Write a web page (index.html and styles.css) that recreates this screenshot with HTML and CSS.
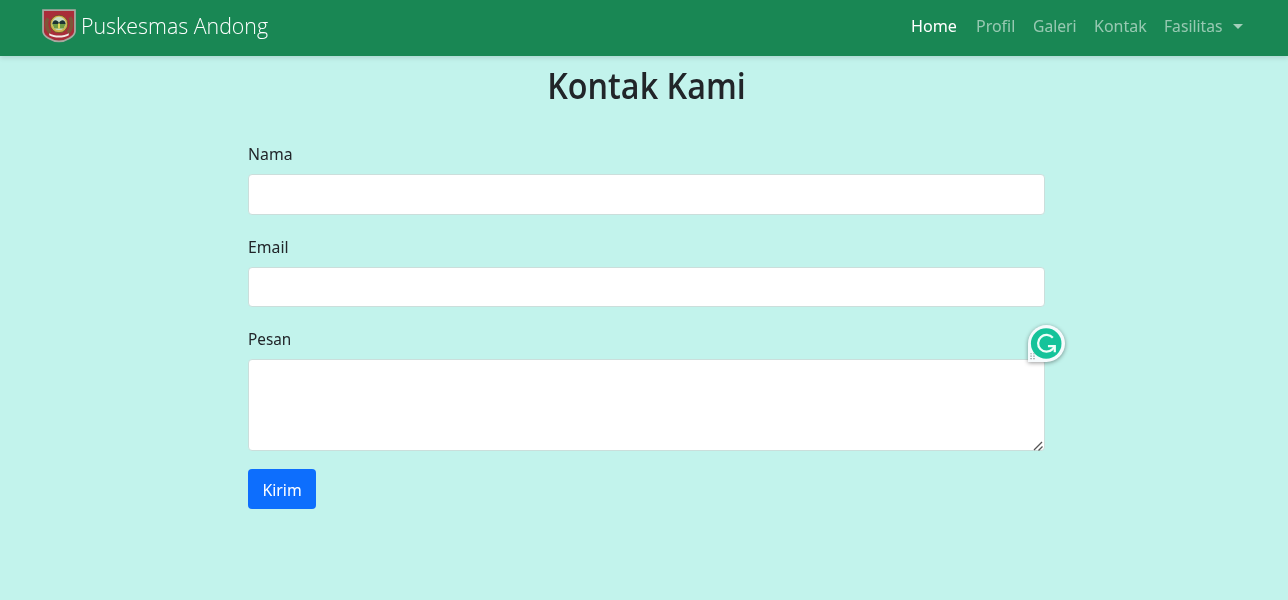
FILE: index.html
```html
<!DOCTYPE html>
<html lang="id">
<head>
<meta charset="utf-8">
<title>Puskesmas Andong</title>
<link rel="stylesheet" href="styles.css">
</head>
<body>
<nav class="navbar">
  <a class="brand">
    <svg class="crest" viewBox="0 0 33 33">
      <path d="M1 1h31v20.500c0 5-9 10-15.500 10S1 26.500 1 21.500z" fill="#a92d39" stroke="#a9a9a1" stroke-width="1.700"/>
      <path d="M6 9C3 13 4 19 8 23M27 8c3 4 2 12-2 15" fill="none" stroke="#805538" stroke-width="3.500"/>
      <circle cx="16.500" cy="14.500" r="8.500" fill="#d1b44d" stroke="#675127" stroke-width=".8"/>
      <circle cx="16.500" cy="14" r="6.500" fill="#c9dec4"/>
      <path d="M10 14.500c1-5 5-4 6.500-1 1.500-3 5.500-4 6.500 1z" fill="#1c3333"/>
      <path d="M10 14.500h13l-2 4.500h-9z" fill="#6f9b43"/>
      <path d="M16.500 14v5" stroke="#e2d65b" stroke-width="2"/>
      <path d="M7 23.500c5 3 14 3 19 0v2c-5 3-14 3-19 0z" fill="#f2e9e4"/>
    </svg>
    <span class="brand-name">Puskesmas Andong</span>
  </a>
  <div class="links">
    <a class="link home">Home</a>
    <a class="link profil">Profil</a>
    <a class="link galeri">Galeri</a>
    <a class="link kontak">Kontak</a>
    <a class="link fasilitas">Fasilitas</a>
    <span class="caret"></span>
  </div>
</nav>
<main class="contact">
  <h1 class="title">Kontak Kami</h1>
  <form class="form">
    <div class="field">
      <label class="label nama" for="nama">Nama</label>
      <input class="control" id="nama" type="text">
    </div>
    <div class="field">
      <label class="label email" for="email">Email</label>
      <input class="control" id="email" type="email">
    </div>
    <div class="field message">
      <label class="label pesan" for="pesan">Pesan</label>
      <textarea class="control area" id="pesan"></textarea>
      <svg class="grip" viewBox="0 0 11 11"><path d="M1 10L9 2M5.500 10.500l4-4" fill="none" stroke="#555" stroke-width="1.300"/></svg>
      <svg class="grammar" viewBox="0 0 38 38">
        <path d="M0 38V19a19 19 0 1 1 19 19z" fill="#f6fbfd"/>
        <circle cx="18.700" cy="19" r="15.700" fill="#15c39a"/>
        <path d="M25.500 13.200A8.600 8.600 0 1 0 25 25L27.500 22" fill="none" stroke="#effff9" stroke-width="2.300"/>
        <path d="M20.500 21.800H27.500V28" fill="none" stroke="#effff9" stroke-width="2.300"/>
        <path d="M2.500 29.500h1.300M5.500 29.500h1.300M2.500 32h1.300M5.500 32h1.300M2.500 34.500h1.300M5.500 34.500h1.300" stroke="#8b9297" stroke-width="1.200"/>
      </svg>
    </div>
    <button class="submit" type="button"><span class="submit-text">Kirim</span></button>
  </form>
</main>
</body>
</html>
```
FILE: styles.css
```css
* { box-sizing: border-box; }
body {
  margin: 0;
  min-height: 600px;
  background: #c2f3ec;
  color: #212529;
  font-family: "Noto Sans", "Open Sans", sans-serif;
  font-size: 17px;
  overflow: hidden;
}
.navbar {
  height: 56px;
  padding: 0 45px 0 42px;
  background: #198754;
  box-shadow: 0 2px 5px rgba(0, 0, 0, .12);
  display: flex;
  justify-content: space-between;
}
.brand { display: flex; color: #fff; }
.crest { width: 34px; height: 34px; margin-top: 9px; }
.brand-name {
  margin-left: 5px;
  font-family: "Open Sans", "Noto Sans", sans-serif;
  font-size: 21.500px;
  font-weight: 350;
  line-height: 52px;
  white-space: nowrap;
  transform: scaleX(.993);
  transform-origin: left;
}
.links { display: flex; gap: 17px; line-height: 52px; color: rgba(255, 255, 255, .55); }
.link { white-space: nowrap; transform-origin: left; }
.home { width: 48px; color: #fff; transform: scaleX(.95); }
.profil { width: 40px; transform: scaleX(.94); }
.galeri { width: 44px; transform: scaleX(.92); }
.kontak { width: 53px; transform: scaleX(.94); }
.fasilitas { width: 59px; transform: scaleX(.92); }
.caret {
  width: 10px;
  height: 5px;
  margin: 24px 0 0 -7px;
  border: 5px solid transparent;
  border-top-color: rgba(255, 255, 255, .6);
  border-bottom: 0;
}
.contact { width: 797px; margin-left: 248px; }
.title {
  margin: 0;
  height: 84.400px;
  padding-top: 7px;
  text-align: center;
  font-family: "Open Sans", "Noto Sans", sans-serif;
  font-size: 35.500px;
  line-height: 45px;
  font-weight: 600;
  transform: scaleX(.911);
}
.field { display: flex; flex-direction: column; margin-bottom: 17.800px; }
.label { height: 34px; line-height: 28px; width: max-content; transform-origin: left; }
.nama { transform: scaleX(.93); }
.email { transform: scaleX(.93); }
.pesan { transform: scaleX(.9); }
.control {
  width: 100%;
  height: 40.500px;
  margin: 0;
  border: 1px solid #cbdedb;
  border-radius: 4px;
  background: #fff;
  font: inherit;
  padding: 6px 13px;
}
.area { height: 92px; resize: none; }
.message { position: relative; }
.grip { position: absolute; right: 1px; bottom: 0; width: 11px; height: 11px; }
.grammar {
  position: absolute;
  left: 780px;
  top: 0;
  width: 37px;
  height: 37px;
  filter: drop-shadow(0 1px 2px rgba(0, 0, 0, .4));
}
.submit {
  display: block;
  width: 68px;
  height: 40.500px;
  padding: 0;
  border: 0;
  border-radius: 4px;
  background: #0d6efd;
  color: #fff;
  font: inherit;
}
.submit-text { display: inline-block; transform: scaleX(.93); }
```
